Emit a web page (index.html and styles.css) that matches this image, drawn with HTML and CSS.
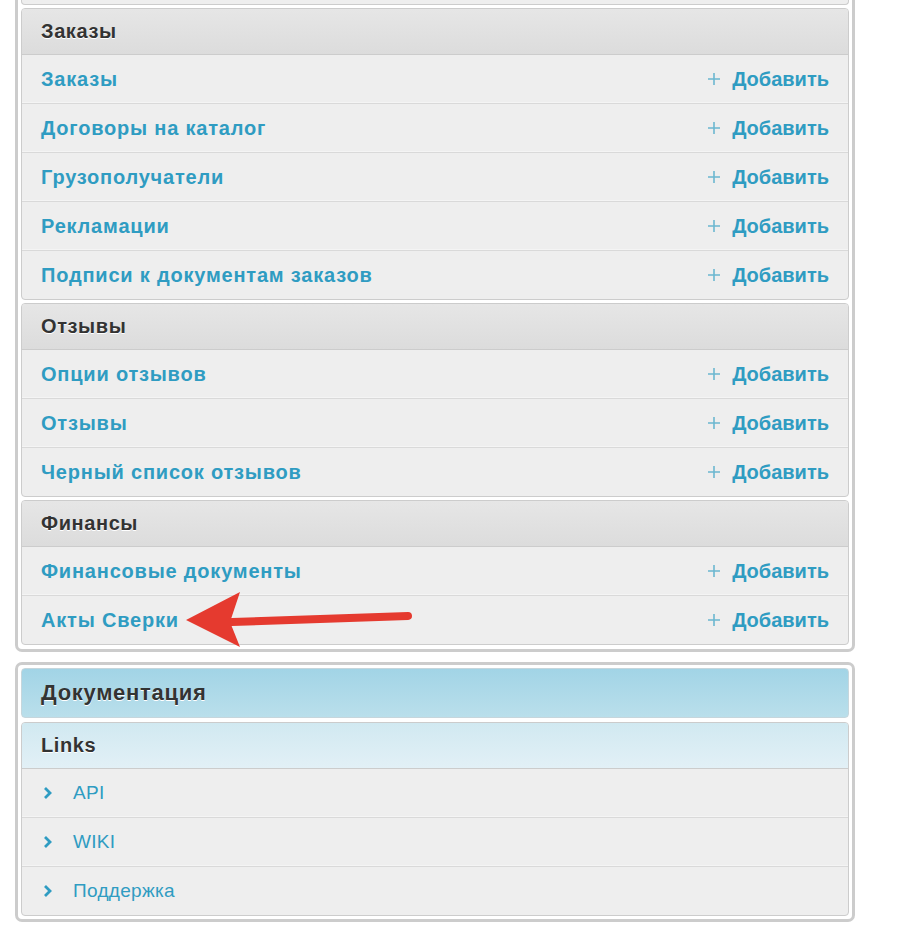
FILE: index.html
```html
<!DOCTYPE html>
<html lang="ru">
<head>
<meta charset="utf-8">
<title>Admin</title>
<link rel="stylesheet" href="styles.css">
</head>
<body>
<div class="page">
  <div class="outer outer-top">
    <div class="stub"></div>
    <div class="module">
      <div class="mod-head">Заказы</div>
      <div class="row"><a class="row-link">Заказы</a><a class="add"><svg class="plus" viewBox="0 0 12 12"><path d="M6 0v12M0 6h12"/></svg>Добавить</a></div>
      <div class="row"><a class="row-link">Договоры на каталог</a><a class="add"><svg class="plus" viewBox="0 0 12 12"><path d="M6 0v12M0 6h12"/></svg>Добавить</a></div>
      <div class="row"><a class="row-link">Грузополучатели</a><a class="add"><svg class="plus" viewBox="0 0 12 12"><path d="M6 0v12M0 6h12"/></svg>Добавить</a></div>
      <div class="row"><a class="row-link">Рекламации</a><a class="add"><svg class="plus" viewBox="0 0 12 12"><path d="M6 0v12M0 6h12"/></svg>Добавить</a></div>
      <div class="row"><a class="row-link">Подписи к документам заказов</a><a class="add"><svg class="plus" viewBox="0 0 12 12"><path d="M6 0v12M0 6h12"/></svg>Добавить</a></div>
    </div>
    <div class="module">
      <div class="mod-head">Отзывы</div>
      <div class="row"><a class="row-link">Опции отзывов</a><a class="add"><svg class="plus" viewBox="0 0 12 12"><path d="M6 0v12M0 6h12"/></svg>Добавить</a></div>
      <div class="row"><a class="row-link">Отзывы</a><a class="add"><svg class="plus" viewBox="0 0 12 12"><path d="M6 0v12M0 6h12"/></svg>Добавить</a></div>
      <div class="row"><a class="row-link">Черный список отзывов</a><a class="add"><svg class="plus" viewBox="0 0 12 12"><path d="M6 0v12M0 6h12"/></svg>Добавить</a></div>
    </div>
    <div class="module">
      <div class="mod-head">Финансы</div>
      <div class="row"><a class="row-link">Финансовые документы</a><a class="add"><svg class="plus" viewBox="0 0 12 12"><path d="M6 0v12M0 6h12"/></svg>Добавить</a></div>
      <div class="row"><a class="row-link">Акты Сверки</a><a class="add"><svg class="plus" viewBox="0 0 12 12"><path d="M6 0v12M0 6h12"/></svg>Добавить</a></div>
    </div>
  </div>

  <div class="outer outer-doc">
    <div class="doc-head">Документация</div>
    <div class="module">
      <div class="mod-head links-head">Links</div>
      <div class="row"><a class="doc-link"><svg class="chev" viewBox="0 0 10 14"><path d="M2 2l5 5-5 5"/></svg>API</a></div>
      <div class="row"><a class="doc-link"><svg class="chev" viewBox="0 0 10 14"><path d="M2 2l5 5-5 5"/></svg>WIKI</a></div>
      <div class="row"><a class="doc-link"><svg class="chev" viewBox="0 0 10 14"><path d="M2 2l5 5-5 5"/></svg>Поддержка</a></div>
    </div>
  </div>

  <svg class="arrow" viewBox="0 0 260 70" width="260" height="70">
    <line x1="52" y1="34" x2="228" y2="28" stroke="#e53a2f" stroke-width="8" stroke-linecap="round"/>
    <path d="M6 32 L60 4 L50 34 L60 59 Z" fill="#e53a2f"/>
  </svg>
</div>
</body>
</html>
```

FILE: styles.css
```css
html, body {
  margin: 0;
  padding: 0;
  background: #ffffff;
}
body {
  font-family: "Liberation Sans", Arial, Helvetica, sans-serif;
  color: #333;
}
.page {
  position: relative;
  width: 840px;
  margin-left: 15px;
  padding-bottom: 40px;
}
.outer {
  border: 3px solid #cccccc;
  border-radius: 7px;
  padding: 3px;
  display: flex;
  flex-direction: column;
  gap: 3px;
  background: #fff;
}
.outer-top {
  border-top: none;
  border-top-left-radius: 0;
  border-top-right-radius: 0;
  padding-top: 0;
  padding-bottom: 4px;
}
.outer-doc {
  margin-top: 10px;
  gap: 4px;
  padding-bottom: 3px;
}
.stub {
  height: 4px;
  border: 1px solid #cccccc;
  border-top: none;
  border-radius: 0 0 4px 4px;
  background: #eeeeee;
}
.module {
  border: 1px solid #cccccc;
  border-radius: 4px;
  background: #eeeeee;
  overflow: hidden;
}
.mod-head {
  height: 45px;
  line-height: 45px;
  padding-left: 19px;
  font-size: 20px;
  font-weight: bold;
  letter-spacing: 0.6px;
  color: #333;
  text-shadow: 0 1px 0 #ffffff;
  background: linear-gradient(#e6e6e6, #dcdcdc);
  border-bottom: 1px solid #cccccc;
}
.links-head {
  background: linear-gradient(#d1e9f1, #e2f0f6);
}
.doc-head {
  height: 48px;
  line-height: 48px;
  padding-left: 19px;
  font-size: 22px;
  font-weight: bold;
  letter-spacing: 0.7px;
  color: #333;
  text-shadow: 0 1px 0 #ffffff;
  border: 1px solid #c6d6dc;
  border-radius: 4px;
  background: linear-gradient(#a2d4e6, #badfeb);
}
.row {
  height: 48px;
  display: flex;
  align-items: center;
  justify-content: space-between;
  padding: 0 19px;
  border-bottom: 1px solid #d9d9d9;
  box-shadow: inset 0 -1px 0 #f4f4f4;
}
.row:last-child {
  border-bottom: none;
  box-shadow: none;
}
.row-link {
  font-size: 20px;
  font-weight: bold;
  letter-spacing: 0.8px;
  color: #2f9cc2;
  text-decoration: none;
}
.add {
  display: flex;
  align-items: center;
  font-size: 20px;
  font-weight: bold;
  color: #2f9cc2;
}
.plus {
  width: 12px;
  height: 12px;
  margin-right: 12px;
  fill: none;
  stroke: #6bb7d0;
  stroke-width: 1.6;
}
.doc-link {
  display: flex;
  align-items: center;
  font-size: 19px;
  letter-spacing: 0.3px;
  color: #2f9cc2;
  padding-left: 2px;
}
.chev {
  width: 10px;
  height: 14px;
  margin-right: 20px;
  fill: none;
  stroke: #2f9cc2;
  stroke-width: 2.8;
}
.arrow {
  position: absolute;
  left: 165px;
  top: 588px;
}
```
